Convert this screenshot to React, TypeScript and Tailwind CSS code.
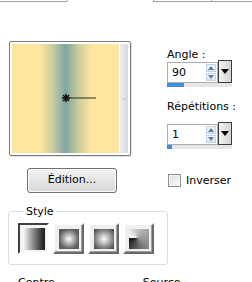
import React from 'react';

function SpinField({value, fill}: {value: string; fill: number}) {
  return (
    <div className="flex flex-col w-[65px]">
      <div className="flex items-start">
        <div className="flex h-[21px] w-[51px] items-center border border-[#abadb3] bg-white">
          <span className="ml-[4px] flex-1 leading-none">{value}</span>
          <div className="mr-[1px] flex flex-col gap-[1px]">
            <SpinArrow up />
            <SpinArrow />
          </div>
        </div>
        <div className="-mt-[2px] flex h-[23px] w-[14px] items-center justify-center border border-[#3d3d3d] bg-gradient-to-r from-[#f2f2f2] to-[#d4d4d4]">
          <svg width="8" height="5" viewBox="0 0 8 5">
            <path d="M0 0 H8 L4 5 Z" fill="#000" />
          </svg>
        </div>
      </div>
      <div className="h-[4px] w-[65px] bg-[#e6e6e6]">
        <div className="h-full bg-[#3f8fdf]" style={{width: `${fill}px`}} />
      </div>
    </div>
  );
}

function SpinArrow({up}: {up?: boolean}) {
  return (
    <div className="flex h-[8px] w-[10px] items-center justify-center border border-[#c5d2e3] bg-gradient-to-b from-[#f4f8fc] to-[#dae4f0]">
      <svg width="6" height="4" viewBox="0 0 6 4">
        <path d={up ? 'M0 4 L3 0 L6 4 Z' : 'M0 0 L6 0 L3 4 Z'} fill="#5a7ba6" />
      </svg>
    </div>
  );
}

function StyleButton({pressed, children}: {pressed?: boolean; children: React.ReactNode}) {
  return (
    <div
      className={
        pressed
          ? 'flex h-[31px] w-[31px] items-center justify-center border-2 border-t-[#404040] border-l-[#404040] border-r-white border-b-white bg-[#f4f4f4]'
          : 'flex h-[31px] w-[31px] items-center justify-center border-2 border-t-white border-l-white border-r-[#6a6a6a] border-b-[#6a6a6a] bg-[#f0f0f0] shadow-[inset_-1px_-1px_0_#a0a0a0]'
      }
    >
      {children}
    </div>
  );
}

export default function App() {
  return (
    <div className="relative h-[282px] w-[252px] overflow-hidden bg-white text-[11px] text-black" style={{fontFamily: '"DejaVu Sans", Tahoma, sans-serif'}}>
      <div className="flex h-[2px]">
        <div className="h-[2px] w-[68px] rounded-br-[2px] border-b border-r border-[#a0a0a0]" />
        <div className="ml-[85px] h-[2px] w-[58px] border-b border-l border-[#a0a0a0]" />
        <div className="h-[2px] flex-1 border-b border-l border-[#a0a0a0]" />
      </div>

      <div className="mt-[39px] flex h-[115px] items-start">
        <div className="ml-[9px] flex h-[115px] w-[122px] rounded-[2px] border border-[#7a7a7a] bg-white p-[2px] shadow-[1px_1px_1px_#e0e0e0]">
          <div className="relative h-full w-[108px] bg-[linear-gradient(to_right,#fee69e_0%,#fee69e_26%,#c9cd9f_38%,#7ea6a2_50%,#c9cd9f_62%,#fee69e_74%,#fee69e_100%)]">
            <svg className="absolute left-0 top-0" width="108" height="107" viewBox="0 0 108 107">
              <line x1="54" y1="54" x2="84" y2="54" stroke="#2b2b1a" strokeWidth="1" />
              <g stroke="#111" strokeWidth="1.6" strokeLinecap="round">
                <line x1="50.5" y1="54" x2="57.5" y2="54" />
                <line x1="54" y1="50.5" x2="54" y2="57.5" />
                <line x1="51.5" y1="51.5" x2="56.5" y2="56.5" />
                <line x1="56.5" y1="51.5" x2="51.5" y2="56.5" />
              </g>
            </svg>
          </div>
          <div className="ml-[1px] flex h-full w-[8px] items-center justify-center bg-gradient-to-r from-[#eeeef2] to-[#d8d9de]">
            <svg width="5" height="3" viewBox="0 0 5 3">
              <path d="M0 0 L2.5 3 L5 0" fill="none" stroke="#c4c4cc" strokeWidth="1" />
            </svg>
          </div>
        </div>

        <div className="ml-[36px] mt-[7px] flex flex-col">
          <span className="leading-[13px]">Angle :</span>
          <div className="mt-[1px]">
            <SpinField value="90" fill={17} />
          </div>
          <span className="mt-[13px] leading-[13px]">Répétitions :</span>
          <div className="mt-[11px]">
            <SpinField value="1" fill={5} />
          </div>
        </div>
      </div>

      <div className="mt-[12px] flex items-center">
        <button className="ml-[27px] h-[25px] w-[90px] rounded-[3px] border border-[#707070] bg-gradient-to-b from-[#f2f2f2] to-[#d9d9d9] text-[11px] shadow-[inset_0_0_0_1px_#fcfcfc]">
          Édition...
        </button>
        <div className="ml-[51px] h-[13px] w-[13px] border border-[#8e8f8f] bg-gradient-to-br from-[#dcdcdc] to-[#fbfbfb] shadow-[inset_0_0_0_1px_#f4f4f4]" />
        <span className="ml-[5px] leading-[13px]">Inverser</span>
      </div>

      <fieldset className="ml-[8px] mt-[12px] h-[60px] w-[160px] rounded-[3px] border border-[#d5dfe5] px-[9px]">
        <legend className="ml-[6px] px-[2px] leading-[13px]">Style</legend>
        <div className="mt-[5px] flex gap-[4px]">
          <StyleButton pressed>
            <div className="h-[22px] w-[22px] bg-gradient-to-r from-white to-[#1a1a1a]" />
          </StyleButton>
          <StyleButton>
            <div className="h-[20px] w-[20px] [background:radial-gradient(closest-side,#ffffff_0%,#a8a8a8_55%,#5e5e5e_100%)]" />
          </StyleButton>
          <StyleButton>
            <div className="h-[20px] w-[20px] [background:radial-gradient(circle_at_center,#ffffff_0%,#9a9a9a_50%,#3a3a3a_100%)]" />
          </StyleButton>
          <StyleButton>
            <div className="h-[20px] w-[20px] [background:conic-gradient(from_270deg_at_40%_45%,#ffffff,#b8b8b8_30%,#8a8a8a_60%,#111111)]" />
          </StyleButton>
        </div>
      </fieldset>

      <div className="mt-[11px] flex leading-[13px]">
        <span className="ml-[18px]">Centre</span>
        <span className="ml-[88px]">Source</span>
      </div>
    </div>
  );
}
